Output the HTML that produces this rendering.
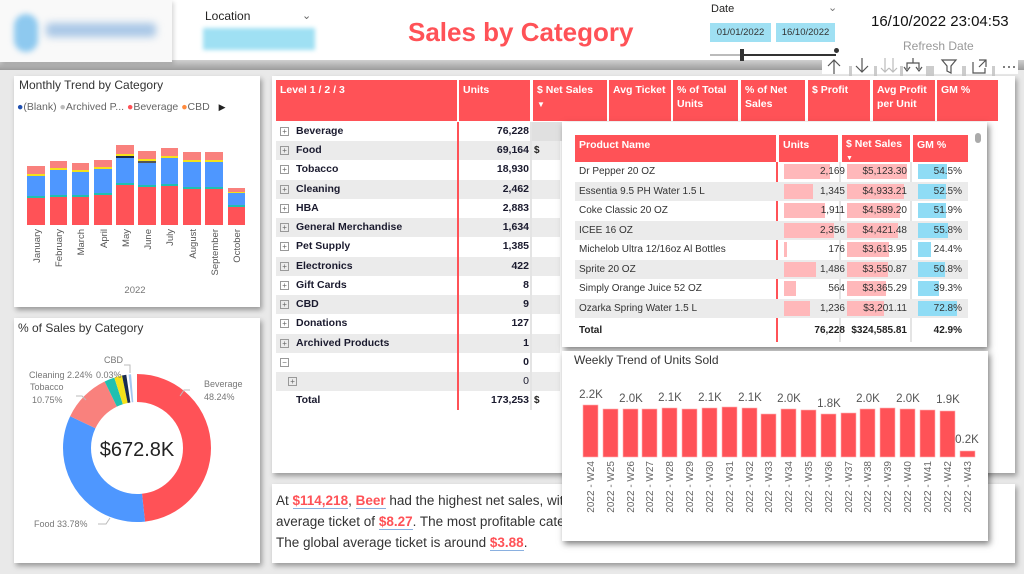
<!DOCTYPE html>
<html><head><meta charset="utf-8"><style>
*{margin:0;padding:0;box-sizing:border-box}
body{width:1024px;height:574px;overflow:hidden;background:#e9e9e9;font-family:"Liberation Sans","DejaVu Sans",sans-serif;position:relative;color:#252423}
.a{position:absolute}
.panel{position:absolute;background:#fff;box-shadow:2px 3px 5px rgba(0,0,0,.35)}
.hd{position:absolute;background:#ff5257;color:#fff;font-weight:bold;font-size:10.5px;line-height:14px;padding:3px 4px}
.row{position:absolute;left:276px;width:284px;height:19px;font-size:10.5px;font-weight:bold;color:#1a1a2e}
.row .n{position:absolute;left:20px;top:3px}
.row .p{position:absolute;left:4px;top:5px;width:9px;height:9px;border:1px solid #999;font-size:8px;line-height:7px;text-align:center;color:#666;font-weight:normal}
.row .u{position:absolute;left:182px;width:71px;text-align:right;top:3px}
.pr{position:absolute;left:575px;width:393px;height:19.5px;font-size:10px;color:#333}
.pr span{position:absolute;top:4px}
.bar{position:absolute;top:2px;height:15px}
</style></head><body>
<!-- header -->
<div class="a" style="left:0;top:0;width:1024px;height:63px;background:#fff"></div>
<div class="a" style="left:0;top:60px;width:1024px;height:10px;background:linear-gradient(#d0d0d0,#9c9c9c)"></div>
<div class="a" style="left:0;top:0;width:172px;height:62px;background:#f9f9f9;box-shadow:2px 2px 4px rgba(0,0,0,.15)"></div>
<div class="a" style="left:14px;top:14px;width:24px;height:38px;border-radius:12px;background:#8ec9ef;filter:blur(3px)"></div>
<div class="a" style="left:46px;top:23px;width:110px;height:14px;background:#a9c7e6;filter:blur(4px);border-radius:4px"></div>
<div class="a" style="left:205px;top:9px;font-size:12px">Location</div>
<div class="a" style="left:302px;top:9px;font-size:11px;color:#666">&#8964;</div>
<div class="a" style="left:203px;top:28px;width:112px;height:22px;background:#9fe0f3;filter:blur(2px)"></div>
<div class="a" style="left:408px;top:17px;font-size:26px;font-weight:bold;color:#ff5257">Sales by Category</div>
<div class="a" style="left:711px;top:3px;font-size:11px">Date</div>
<div class="a" style="left:828px;top:1px;font-size:11px;color:#777">&#8964;</div>
<div class="a" style="left:710px;top:23px;width:61px;height:19px;background:#9fe0f3;font-size:9.5px;line-height:19px;text-align:center;color:#333">01/01/2022</div>
<div class="a" style="left:776px;top:23px;width:59px;height:19px;background:#9fe0f3;font-size:9.5px;line-height:19px;text-align:center;color:#333">16/10/2022</div>
<div class="a" style="left:710px;top:54px;width:126px;height:2px;background:#bbb"></div>
<div class="a" style="left:740px;top:49px;width:4px;height:12px;background:#333"></div>
<div class="a" style="left:744px;top:54px;width:92px;height:2px;background:#333"></div>
<div class="a" style="left:834px;top:48px;width:5px;height:5px;border-radius:50%;background:#333"></div>
<div class="a" style="left:871px;top:13px;font-size:15px;color:#111">16/10/2022 23:04:53</div>
<div class="a" style="left:903px;top:39px;font-size:12px;color:#999">Refresh Date</div>
<div class="a" style="left:822px;top:56px;width:196px;height:18px;background:#fff"></div>
<svg class="a" style="left:822px;top:54px" width="200" height="22"><g stroke="#555" fill="none" stroke-width="1.2">
<path d="M12 20V6M6 12l6-6 6 6"/>
<path d="M40 4v14M34 12l6 6 6-6"/>
<path d="M63 4v14M59 14l4 4 4-4M71 4v14M67 14l4 4 4-4" stroke="#bbb"/>
<path d="M91 4v5M85 15V9h12v6M82 13l3 4 3-4M94 13l3 4 3-4"/>
<path d="M120 6h14l-5 6v7l-4-2v-5z"/>
<path d="M151 8v11h12v-5M157 6h7v7M164 6l-7 7"/></g>
<g fill="#555"><circle cx="182" cy="13" r="1"/><circle cx="187" cy="13" r="1"/><circle cx="192" cy="13" r="1"/></g>
<g fill="#ccc"><rect x="27" y="12" width="3" height="10"/><rect x="52" y="12" width="3" height="10"/><rect x="78" y="12" width="3" height="10"/><rect x="104" y="12" width="8" height="10"/><rect x="140" y="12" width="4" height="10"/><rect x="170" y="12" width="3" height="10"/></g></svg>

<!-- Monthly trend panel -->
<div class="panel" style="left:14px;top:76px;width:246px;height:231px"></div>
<div class="a" style="left:19px;top:78px;font-size:12px;color:#333">Monthly Trend by Category</div>
<div class="a" style="left:17px;top:101px;font-size:10.5px;color:#666;white-space:nowrap"><span style="color:#1f4fb0">●</span>(Blank) <span style="color:#bbb">●</span>Archived P... <span style="color:#ff5257">●</span>Beverage <span style="color:#ff8a3d">●</span>CBD <span style="color:#222;margin-left:6px;font-size:9px">▶</span></div>
<svg class="a" style="left:0;top:0" width="270" height="310">
<g>
<rect x="27" y="166" width="18" height="8" fill="#f9817d"/><rect x="27" y="174" width="18" height="2" fill="#f5e11a"/><rect x="27" y="176" width="18" height="20" fill="#4e97ff"/><rect x="27" y="196" width="18" height="2" fill="#1fc0b0"/><rect x="27" y="198" width="18" height="27" fill="#ff5257"/>
<rect x="50" y="161" width="17" height="7" fill="#f9817d"/><rect x="50" y="168" width="17" height="2" fill="#f5e11a"/><rect x="50" y="170" width="17" height="25" fill="#4e97ff"/><rect x="50" y="195" width="17" height="2" fill="#1fc0b0"/><rect x="50" y="197" width="17" height="28" fill="#ff5257"/>
<rect x="72" y="163" width="17" height="7" fill="#f9817d"/><rect x="72" y="170" width="17" height="2" fill="#f5e11a"/><rect x="72" y="172" width="17" height="23" fill="#4e97ff"/><rect x="72" y="195" width="17" height="2" fill="#1fc0b0"/><rect x="72" y="197" width="17" height="28" fill="#ff5257"/>
<rect x="94" y="160" width="18" height="7" fill="#f9817d"/><rect x="94" y="167" width="18" height="2" fill="#f5e11a"/><rect x="94" y="169" width="18" height="24" fill="#4e97ff"/><rect x="94" y="193" width="18" height="2" fill="#1fc0b0"/><rect x="94" y="195" width="18" height="30" fill="#ff5257"/>
<rect x="116" y="145" width="18" height="9" fill="#f9817d"/><rect x="116" y="154" width="18" height="2" fill="#f5e11a"/><rect x="116" y="156" width="18" height="2" fill="#1a2c50"/><rect x="116" y="158" width="18" height="25" fill="#4e97ff"/><rect x="116" y="183" width="18" height="2" fill="#1fc0b0"/><rect x="116" y="185" width="18" height="40" fill="#ff5257"/>
<rect x="138" y="151" width="18" height="8" fill="#f9817d"/><rect x="138" y="159" width="18" height="2" fill="#f5e11a"/><rect x="138" y="161" width="18" height="2" fill="#555"/><rect x="138" y="163" width="18" height="22" fill="#4e97ff"/><rect x="138" y="185" width="18" height="2" fill="#1fc0b0"/><rect x="138" y="187" width="18" height="38" fill="#ff5257"/>
<rect x="161" y="148" width="17" height="8" fill="#f9817d"/><rect x="161" y="156" width="17" height="2" fill="#f5e11a"/><rect x="161" y="158" width="17" height="26" fill="#4e97ff"/><rect x="161" y="184" width="17" height="2" fill="#1fc0b0"/><rect x="161" y="186" width="17" height="39" fill="#ff5257"/>
<rect x="183" y="152" width="18" height="8" fill="#f9817d"/><rect x="183" y="160" width="18" height="2" fill="#f5e11a"/><rect x="183" y="162" width="18" height="25" fill="#4e97ff"/><rect x="183" y="187" width="18" height="2" fill="#1fc0b0"/><rect x="183" y="189" width="18" height="36" fill="#ff5257"/>
<rect x="205" y="152" width="18" height="8" fill="#f9817d"/><rect x="205" y="160" width="18" height="2" fill="#f5e11a"/><rect x="205" y="162" width="18" height="25" fill="#4e97ff"/><rect x="205" y="187" width="18" height="2" fill="#1fc0b0"/><rect x="205" y="189" width="18" height="36" fill="#ff5257"/>
<rect x="228" y="188" width="17" height="4" fill="#f9817d"/><rect x="228" y="192" width="17" height="1" fill="#f5e11a"/><rect x="228" y="193" width="17" height="12" fill="#4e97ff"/><rect x="228" y="205" width="17" height="2" fill="#1fc0b0"/><rect x="228" y="207" width="17" height="18" fill="#ff5257"/>
</g>
<g font-size="9.5" fill="#555" text-anchor="end" font-family="Liberation Sans,sans-serif">
<text transform="translate(40,229) rotate(-90)">January</text>
<text transform="translate(62,229) rotate(-90)">February</text>
<text transform="translate(84,229) rotate(-90)">March</text>
<text transform="translate(107,229) rotate(-90)">April</text>
<text transform="translate(129,229) rotate(-90)">May</text>
<text transform="translate(151,229) rotate(-90)">June</text>
<text transform="translate(173,229) rotate(-90)">July</text>
<text transform="translate(196,229) rotate(-90)">August</text>
<text transform="translate(218,229) rotate(-90)">September</text>
<text transform="translate(240,229) rotate(-90)">October</text>
<text x="135" y="293" text-anchor="middle" fill="#777">2022</text>
</g>
</svg>

<!-- donut panel -->
<div class="panel" style="left:14px;top:318px;width:246px;height:245px"></div>
<div class="a" style="left:18px;top:321px;font-size:12px;color:#333">% of Sales by Category</div>
<svg class="a" style="left:14px;top:318px" width="246" height="245">
<g transform="translate(123,130) rotate(-90)" fill="none" stroke-width="28">
<circle r="60" stroke="#ff5257" stroke-dasharray="181.9 377" stroke-dashoffset="0"/>
<circle r="60" stroke="#4e97ff" stroke-dasharray="127.3 377" stroke-dashoffset="-181.9"/>
<circle r="60" stroke="#f9817d" stroke-dasharray="40.5 377" stroke-dashoffset="-309.2"/>
<circle r="60" stroke="#1fc0b0" stroke-dasharray="8.4 377" stroke-dashoffset="-349.7"/>
<circle r="60" stroke="#f5e11a" stroke-dasharray="6.5 377" stroke-dashoffset="-358.1"/>
<circle r="60" stroke="#1a2c50" stroke-dasharray="3.5 377" stroke-dashoffset="-364.6"/>
<circle r="60" stroke="#a6c8f0" stroke-dasharray="2 377" stroke-dashoffset="-370"/>
</g>
<text x="123" y="138" text-anchor="middle" font-size="20" fill="#222" font-family="Liberation Sans,sans-serif">$672.8K</text>
<g font-size="9" fill="#777" font-family="Liberation Sans,sans-serif">
<text x="190" y="69">Beverage</text><text x="190" y="82">48.24%</text>
<text x="15" y="60">Cleaning 2.24%</text><text x="90" y="45">CBD</text><text x="82" y="60">0.03%</text>
<text x="16" y="72">Tobacco</text><text x="18" y="85">10.75%</text>
<text x="20" y="209">Food 33.78%</text>
</g>
<g stroke="#bbb" fill="none"><path d="M176 72h-6l-4 6M84 206h8l4-6M62 78h6l4 4M110 47h6v8"/></g>
</svg>

<!-- matrix panel -->
<div class="panel" style="left:272px;top:76px;width:743px;height:397px"></div>
<div class="hd" style="left:276px;top:80px;width:181px;height:41px">Level 1 / 2 / 3</div>
<div class="hd" style="left:459px;top:80px;width:71px;height:41px">Units</div>
<div class="hd" style="left:533px;top:80px;width:74px;height:41px">$ Net Sales<br><span style="font-size:8px">▼</span></div>
<div class="hd" style="left:609px;top:80px;width:62px;height:41px">Avg Ticket</div>
<div class="hd" style="left:673px;top:80px;width:65px;height:41px">% of Total Units</div>
<div class="hd" style="left:741px;top:80px;width:64px;height:41px">% of Net Sales</div>
<div class="hd" style="left:808px;top:80px;width:62px;height:41px">$ Profit</div>
<div class="hd" style="left:873px;top:80px;width:62px;height:41px">Avg Profit per Unit</div>
<div class="hd" style="left:937px;top:80px;width:61px;height:41px">GM %</div>

<div class="row" style="top:122px"><i class="p">+</i><span class="n">Beverage</span><span class="u">76,228</span></div>
<div class="row" style="top:141px;background:#ebebeb"><i class="p">+</i><span class="n">Food</span><span class="u">69,164</span></div>
<div class="row" style="top:160px"><i class="p">+</i><span class="n">Tobacco</span><span class="u">18,930</span></div>
<div class="row" style="top:180px;background:#ebebeb"><i class="p">+</i><span class="n">Cleaning</span><span class="u">2,462</span></div>
<div class="row" style="top:199px"><i class="p">+</i><span class="n">HBA</span><span class="u">2,883</span></div>
<div class="row" style="top:218px;background:#ebebeb"><i class="p">+</i><span class="n">General Merchandise</span><span class="u">1,634</span></div>
<div class="row" style="top:237px"><i class="p">+</i><span class="n">Pet Supply</span><span class="u">1,385</span></div>
<div class="row" style="top:257px;background:#ebebeb"><i class="p">+</i><span class="n">Electronics</span><span class="u">422</span></div>
<div class="row" style="top:276px"><i class="p">+</i><span class="n">Gift Cards</span><span class="u">8</span></div>
<div class="row" style="top:295px;background:#ebebeb"><i class="p">+</i><span class="n">CBD</span><span class="u">9</span></div>
<div class="row" style="top:314px"><i class="p">+</i><span class="n">Donations</span><span class="u">127</span></div>
<div class="row" style="top:334px;background:#ebebeb"><i class="p">+</i><span class="n">Archived Products</span><span class="u">1</span></div>
<div class="row" style="top:353px"><i class="p">−</i><span class="u">0</span></div>
<div class="row" style="top:372px;background:#ebebeb"><i class="p" style="left:12px">+</i><span class="u" style="font-weight:normal">0</span></div>
<div class="row" style="top:391px"><span class="n">Total</span><span class="u">173,253</span></div>
<div class="a" style="left:532px;top:122px;width:30px;height:19px;background:#e0e0e0"></div>
<div class="a" style="left:457px;top:122px;width:2px;height:288px;background:#ff5257"></div>
<div class="a" style="left:530px;top:122px;width:2px;height:288px;background:#e4e4e4"></div>
<div class="a" style="left:534px;top:145px;font-size:10px;font-weight:bold">$</div>
<div class="a" style="left:534px;top:395px;font-size:10px;font-weight:bold">$</div>

<!-- tooltip table -->
<div class="panel" style="left:562px;top:122px;width:425px;height:225px;box-shadow:2px 3px 6px rgba(0,0,0,.5)"></div>
<div class="a" style="left:975px;top:133px;width:6px;height:10px;border-radius:3px;background:#aaa"></div>
<div class="hd" style="left:575px;top:135px;width:201px;height:27px">Product Name</div>
<div class="hd" style="left:779px;top:135px;width:59px;height:27px">Units</div>
<div class="hd" style="left:842px;top:135px;width:68px;height:27px;line-height:13px">$ Net Sales<br><span style="font-size:7px">▼</span></div>
<div class="hd" style="left:913px;top:135px;width:55px;height:27px">GM %</div>
<div class="a" style="left:776px;top:162px;width:2px;height:180px;background:#ff5257"></div>
<div class="a" style="left:839px;top:162px;width:2px;height:180px;background:#e4e4e4"></div>
<div class="a" style="left:910px;top:162px;width:2px;height:180px;background:#e4e4e4"></div>

<div class="pr" style="top:162px"><span style="left:4px">Dr Pepper 20 OZ</span><i class="bar" style="left:209px;width:46px;background:#ffb8ba"></i><span style="left:210px;width:60px;text-align:right">2,169</span><i class="bar" style="left:272px;width:60px;background:#ffb8ba"></i><span style="left:272px;width:60px;text-align:right">$5,123.30</span><i class="bar" style="left:343px;width:29px;background:#8fdcf5"></i><span style="left:340px;width:47px;text-align:right">54.5%</span></div>
<div class="pr" style="top:181.5px;background:#ebebeb"><span style="left:4px">Essentia 9.5 PH Water 1.5 L</span><i class="bar" style="left:209px;width:29px;background:#ffb8ba"></i><span style="left:210px;width:60px;text-align:right">1,345</span><i class="bar" style="left:272px;width:57px;background:#ffb8ba"></i><span style="left:272px;width:60px;text-align:right">$4,933.21</span><i class="bar" style="left:343px;width:28px;background:#8fdcf5"></i><span style="left:340px;width:47px;text-align:right">52.5%</span></div>
<div class="pr" style="top:201px"><span style="left:4px">Coke Classic 20 OZ</span><i class="bar" style="left:209px;width:41px;background:#ffb8ba"></i><span style="left:210px;width:60px;text-align:right">1,911</span><i class="bar" style="left:272px;width:53px;background:#ffb8ba"></i><span style="left:272px;width:60px;text-align:right">$4,589.20</span><i class="bar" style="left:343px;width:28px;background:#8fdcf5"></i><span style="left:340px;width:47px;text-align:right">51.9%</span></div>
<div class="pr" style="top:220.5px;background:#ebebeb"><span style="left:4px">ICEE 16 OZ</span><i class="bar" style="left:209px;width:50px;background:#ffb8ba"></i><span style="left:210px;width:60px;text-align:right">2,356</span><i class="bar" style="left:272px;width:51px;background:#ffb8ba"></i><span style="left:272px;width:60px;text-align:right">$4,421.48</span><i class="bar" style="left:343px;width:30px;background:#8fdcf5"></i><span style="left:340px;width:47px;text-align:right">55.8%</span></div>
<div class="pr" style="top:240px"><span style="left:4px">Michelob Ultra 12/16oz Al Bottles</span><i class="bar" style="left:209px;width:3px;background:#ffb8ba"></i><span style="left:210px;width:60px;text-align:right">176</span><i class="bar" style="left:272px;width:42px;background:#ffb8ba"></i><span style="left:272px;width:60px;text-align:right">$3,613.95</span><i class="bar" style="left:343px;width:13px;background:#8fdcf5"></i><span style="left:340px;width:47px;text-align:right">24.4%</span></div>
<div class="pr" style="top:259.5px;background:#ebebeb"><span style="left:4px">Sprite 20 OZ</span><i class="bar" style="left:209px;width:32px;background:#ffb8ba"></i><span style="left:210px;width:60px;text-align:right">1,486</span><i class="bar" style="left:272px;width:41px;background:#ffb8ba"></i><span style="left:272px;width:60px;text-align:right">$3,550.87</span><i class="bar" style="left:343px;width:27px;background:#8fdcf5"></i><span style="left:340px;width:47px;text-align:right">50.8%</span></div>
<div class="pr" style="top:279px"><span style="left:4px">Simply Orange Juice 52 OZ</span><i class="bar" style="left:209px;width:12px;background:#ffb8ba"></i><span style="left:210px;width:60px;text-align:right">564</span><i class="bar" style="left:272px;width:39px;background:#ffb8ba"></i><span style="left:272px;width:60px;text-align:right">$3,365.29</span><i class="bar" style="left:343px;width:21px;background:#8fdcf5"></i><span style="left:340px;width:47px;text-align:right">39.3%</span></div>
<div class="pr" style="top:298.5px;background:#ebebeb"><span style="left:4px">Ozarka Spring Water 1.5 L</span><i class="bar" style="left:209px;width:26px;background:#ffb8ba"></i><span style="left:210px;width:60px;text-align:right">1,236</span><i class="bar" style="left:272px;width:37px;background:#ffb8ba"></i><span style="left:272px;width:60px;text-align:right">$3,201.11</span><i class="bar" style="left:343px;width:39px;background:#8fdcf5"></i><span style="left:340px;width:47px;text-align:right">72.8%</span></div>
<div class="pr" style="top:321px;font-weight:bold;color:#222"><span style="left:4px">Total</span><span style="left:210px;width:60px;text-align:right">76,228</span><span style="left:265px;width:67px;text-align:right">$324,585.81</span><span style="left:340px;width:47px;text-align:right">42.9%</span></div>

<!-- text box -->
<div class="panel" style="left:272px;top:484px;width:743px;height:79px"></div>
<div class="a" style="left:276px;top:490px;font-size:13.5px;line-height:21px;color:#333;width:300px;white-space:nowrap">At <b style="color:#ff5257;border-bottom:1px solid #8ab0e0">$114,218</b>, <b style="color:#ff5257;border-bottom:1px solid #8ab0e0">Beer</b> had the highest net sales, wit<br>average ticket of <b style="color:#ff5257;border-bottom:1px solid #8ab0e0">$8.27</b>. The most profitable categ<br>The global average ticket is around <b style="color:#ff5257;border-bottom:1px solid #8ab0e0">$3.88</b>.</div>

<!-- weekly chart -->
<div class="panel" style="left:562px;top:351px;width:426px;height:190px;box-shadow:2px 3px 6px rgba(0,0,0,.5)"></div>
<div class="a" style="left:574px;top:353px;font-size:12px;color:#333">Weekly Trend of Units Sold</div>
<svg class="a" style="left:562px;top:351px" width="426" height="190" font-family="Liberation Sans,sans-serif">
<g fill="#ff5257" stroke="#ffb0b2" stroke-width=".6">
<rect x="21" y="54" width="15" height="52"/><rect x="41" y="58" width="15" height="48"/><rect x="61" y="58" width="15" height="48"/><rect x="80" y="58" width="15" height="48"/><rect x="100" y="57" width="15" height="49"/><rect x="120" y="58" width="15" height="48"/><rect x="140" y="57" width="15" height="49"/><rect x="160" y="56" width="15" height="50"/><rect x="180" y="57" width="15" height="49"/><rect x="199" y="63" width="15" height="43"/><rect x="219" y="58" width="15" height="48"/><rect x="239" y="59" width="15" height="47"/><rect x="259" y="63" width="15" height="43"/><rect x="279" y="62" width="15" height="44"/><rect x="298" y="58" width="15" height="48"/><rect x="318" y="57" width="15" height="49"/><rect x="338" y="58" width="15" height="48"/><rect x="358" y="59" width="15" height="47"/><rect x="378" y="60" width="15" height="46"/><rect x="398" y="100" width="15" height="6"/>
</g>
<g font-size="11.5" fill="#555" text-anchor="middle">
<text x="29" y="47">2.2K</text><text x="69" y="51">2.0K</text><text x="108" y="50">2.1K</text><text x="148" y="50">2.1K</text><text x="188" y="50">2.1K</text><text x="227" y="51">2.0K</text><text x="267" y="56">1.8K</text><text x="306" y="51">2.0K</text><text x="346" y="51">2.0K</text><text x="386" y="52">1.9K</text><text x="405" y="92">0.2K</text>
</g>
<g font-size="10" fill="#666" text-anchor="end">
<text transform="translate(32,110) rotate(-90)">2022 - W24</text><text transform="translate(52,110) rotate(-90)">2022 - W25</text><text transform="translate(72,110) rotate(-90)">2022 - W26</text><text transform="translate(91,110) rotate(-90)">2022 - W27</text><text transform="translate(111,110) rotate(-90)">2022 - W28</text><text transform="translate(131,110) rotate(-90)">2022 - W29</text><text transform="translate(151,110) rotate(-90)">2022 - W30</text><text transform="translate(171,110) rotate(-90)">2022 - W31</text><text transform="translate(191,110) rotate(-90)">2022 - W32</text><text transform="translate(210,110) rotate(-90)">2022 - W33</text><text transform="translate(230,110) rotate(-90)">2022 - W34</text><text transform="translate(250,110) rotate(-90)">2022 - W35</text><text transform="translate(270,110) rotate(-90)">2022 - W36</text><text transform="translate(290,110) rotate(-90)">2022 - W37</text><text transform="translate(309,110) rotate(-90)">2022 - W38</text><text transform="translate(329,110) rotate(-90)">2022 - W39</text><text transform="translate(349,110) rotate(-90)">2022 - W40</text><text transform="translate(369,110) rotate(-90)">2022 - W41</text><text transform="translate(389,110) rotate(-90)">2022 - W42</text><text transform="translate(409,110) rotate(-90)">2022 - W43</text>
</g>
</svg>
</body></html>
